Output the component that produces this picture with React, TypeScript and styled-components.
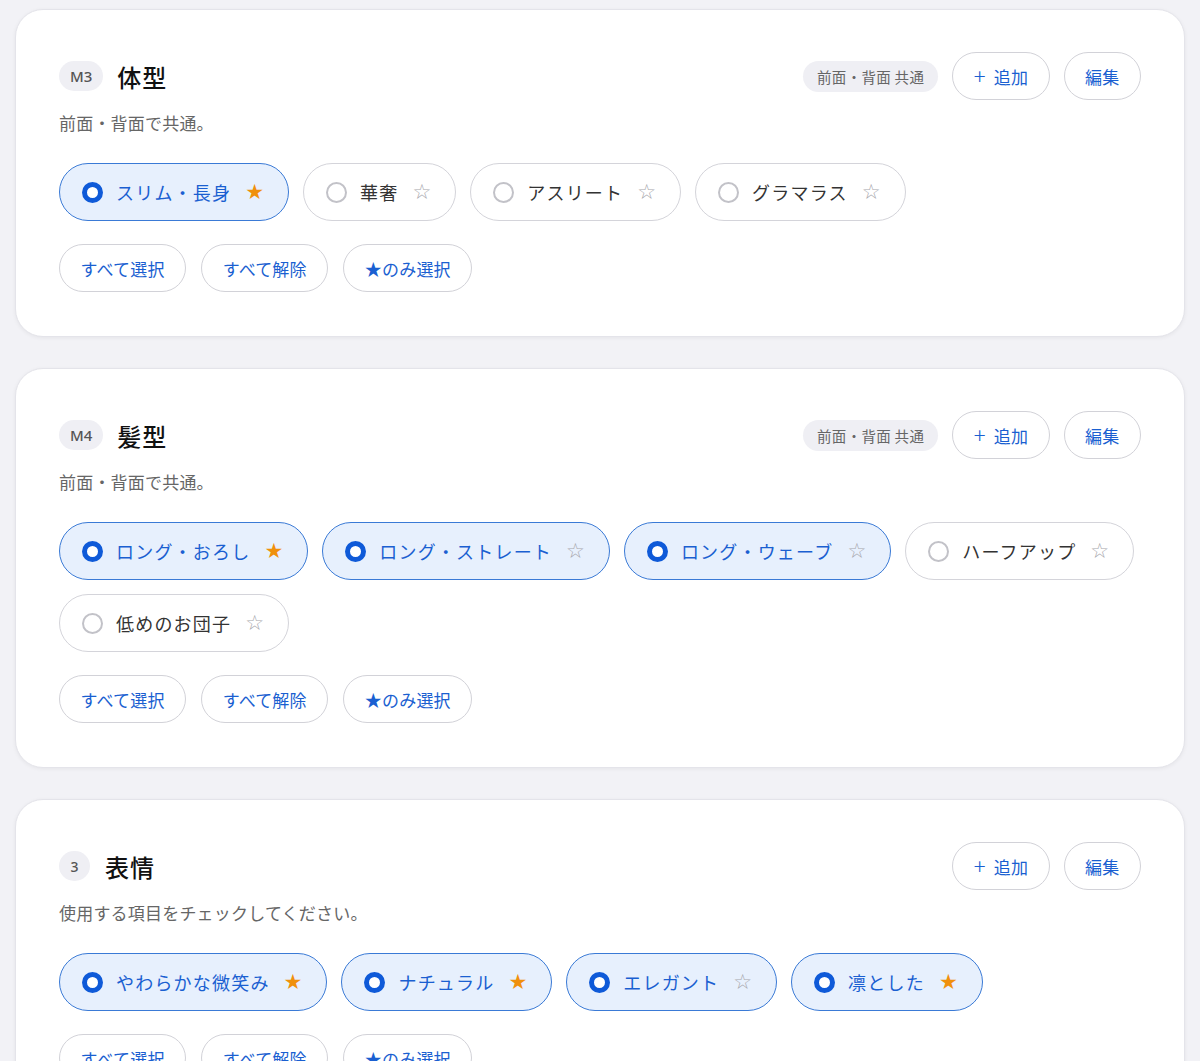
import React from "react";
import styled, { createGlobalStyle } from "styled-components";

const GlobalStyle = createGlobalStyle`
    body {
        margin: 0;
        background: #f2f2f6;
        font-family: "Noto Sans CJK JP", "Noto Sans", sans-serif;
        color: #1c1c1e;
    }
`

const Page = styled.div`
    display: flex;
    flex-direction: column;
    gap: 31px;
    padding: 9px 15px 40px 15px;
`

const Card = styled.section`
    background: #fff;
    border-radius: 28px;
    border: 1px solid #e4e4ea;
    box-shadow: 0 1px 4px rgba(0, 0, 0, 0.06);
    padding: 42px 43px 44px 43px;
    display: flex;
    flex-direction: column;
`

const Header = styled.div`
    display: flex;
    align-items: center;
    height: 48px;
`

const Badge = styled.span<{ $round?: boolean }>`
    display: inline-flex;
    align-items: center;
    justify-content: center;
    height: 30px;
    min-width: 31px;
    padding: ${({ $round }) => ($round ? "0" : "0 11px")};
    box-sizing: border-box;
    border-radius: 15px;
    background: #efeff4;
    color: #555;
    font-family: "Noto Sans", sans-serif;
    font-size: ${({ $round }) => ($round ? "14px" : "15px")};
    font-weight: 500;
`

const Title = styled.h2<{ $gap: number }>`
    margin: 0 0 0 ${({ $gap }) => $gap}px;
    font-size: 24px;
    font-weight: 500;
    color: #111;
    letter-spacing: 1px;
`

const HeaderRight = styled.div`
    margin-left: auto;
    display: flex;
    align-items: center;
    gap: 14px;
`

const Tag = styled.span`
    display: inline-flex;
    align-items: center;
    height: 31px;
    padding: 0 14px;
    border-radius: 16px;
    background: #efeff4;
    color: #666;
    font-size: 14.5px;
    letter-spacing: 0.3px;
`

const PillButton = styled.button`
    height: 48px;
    padding: 0 20.5px;
    border-radius: 24px;
    border: 1.5px solid #d2d2d8;
    background: #fff;
    color: #1a5fd1;
    font-family: "Noto Sans CJK JP", "Noto Sans", sans-serif;
    font-size: 17px;
    letter-spacing: 0.2px;
    cursor: pointer;
    display: inline-flex;
    align-items: center;
    gap: 8px;
`

const Plus = styled.span`
    font-size: 22px;
    font-weight: 300;
    line-height: 1;
    margin-top: -2px;
`

const Desc = styled.p`
    margin: 11px 0 0 0;
    font-size: 17px;
    line-height: 24px;
    color: #666;
    letter-spacing: 0.2px;
`

const ChipWrap = styled.div`
    display: flex;
    flex-wrap: wrap;
    gap: 14px 14px;
    margin-top: 28px;
`

const Chip = styled.button<{ $on: boolean }>`
    height: 58px;
    box-sizing: border-box;
    display: inline-flex;
    align-items: center;
    padding: 0 24px 0 22px;
    border-radius: 29px;
    border: 1.5px solid ${({ $on }) => ($on ? "#3a7ad6" : "#d4d4da")};
    background: ${({ $on }) => ($on ? "#e7f0fd" : "#fff")};
    color: ${({ $on }) => ($on ? "#1a5fd1" : "#333")};
    font-family: "Noto Sans CJK JP", "Noto Sans", sans-serif;
    font-size: 18px;
    letter-spacing: 1.2px;
    cursor: pointer;
`

const Radio = styled.span<{ $on: boolean }>`
    width: 21px;
    height: 21px;
    box-sizing: border-box;
    border-radius: 50%;
    border: ${({ $on }) => ($on ? "5px solid #0f5ad8" : "2px solid #c2c2c8")};
    background: #fff;
    margin-right: 13px;
    flex-shrink: 0;
`

const Star = styled.span<{ $on: boolean }>`
    margin-left: 14px;
    font-size: 21px;
    line-height: 1;
    color: ${({ $on }) => ($on ? "#f0900c" : "#a8a8ae")};
    font-family: "DejaVu Sans", sans-serif;
    letter-spacing: 0;
`

const ActionRow = styled.div`
    display: flex;
    gap: 15px;
    margin-top: 23px;
`

type Item = { label: string; on: boolean; star: boolean }

type Section = {
    badge: string
    title: string
    desc: string
    shared: boolean
    items: Item[]
}

const sections: Section[] = [
    {
        badge: "M3",
        title: "体型",
        desc: "前面・背面で共通。",
        shared: true,
        items: [
            { label: "スリム・長身", on: true, star: true },
            { label: "華奢", on: false, star: false },
            { label: "アスリート", on: false, star: false },
            { label: "グラマラス", on: false, star: false },
        ],
    },
    {
        badge: "M4",
        title: "髪型",
        desc: "前面・背面で共通。",
        shared: true,
        items: [
            { label: "ロング・おろし", on: true, star: true },
            { label: "ロング・ストレート", on: true, star: false },
            { label: "ロング・ウェーブ", on: true, star: false },
            { label: "ハーフアップ", on: false, star: false },
            { label: "低めのお団子", on: false, star: false },
        ],
    },
    {
        badge: "3",
        title: "表情",
        desc: "使用する項目をチェックしてください。",
        shared: false,
        items: [
            { label: "やわらかな微笑み", on: true, star: true },
            { label: "ナチュラル", on: true, star: true },
            { label: "エレガント", on: true, star: false },
            { label: "凛とした", on: true, star: true },
        ],
    },
]

function SectionCard({ section }: { section: Section }) {
    const round = section.badge.length === 1
    return (
        <Card>
            <Header>
                <Badge $round={round}>{section.badge}</Badge>
                <Title $gap={round ? 15 : 14}>{section.title}</Title>
                <HeaderRight>
                    {section.shared && <Tag>前面・背面 共通</Tag>}
                    <PillButton>
                        <Plus>+</Plus>追加
                    </PillButton>
                    <PillButton>編集</PillButton>
                </HeaderRight>
            </Header>
            <Desc>{section.desc}</Desc>
            <ChipWrap>
                {section.items.map((item) => (
                    <Chip key={item.label} $on={item.on}>
                        <Radio $on={item.on} />
                        {item.label}
                        <Star $on={item.star}>{item.star ? "★" : "☆"}</Star>
                    </Chip>
                ))}
            </ChipWrap>
            <ActionRow>
                <PillButton>すべて選択</PillButton>
                <PillButton>すべて解除</PillButton>
                <PillButton>★のみ選択</PillButton>
            </ActionRow>
        </Card>
    )
}

export default function App() {
    return (
        <React.Fragment>
            <GlobalStyle />
            <Page>
                {sections.map((s) => (
                    <SectionCard key={s.title} section={s} />
                ))}
            </Page>
        </React.Fragment>
    )
}
